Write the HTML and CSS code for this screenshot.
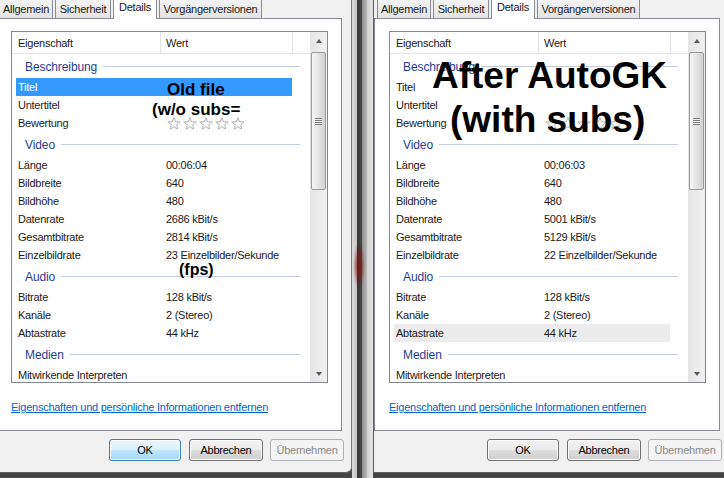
FILE: index.html
```html
<!DOCTYPE html>
<html>
<head>
<meta charset="utf-8">
<title>Eigenschaften - Details</title>
<link rel="stylesheet" href="styles.css">
</head>
<body>

<!-- old file -->
<div class="win win-left">
    <div class="tabs">
        <div class="tab t-allg">Allgemein</div>
        <div class="tab t-sich">Sicherheit</div>
        <div class="tab tab-on t-det">Details</div>
        <div class="tab t-vorg">Vorgängerversionen</div>
    </div>
    <div class="page">
        <div class="lv">
            <div class="lv-main">
                <div class="lv-head">
                    <div class="hcol hcol-1">Eigenschaft</div>
                    <div class="hcol hcol-2">Wert</div>
                    <div class="hcol hcol-3"></div>
                </div>
                <div class="grp"><span>Beschreibung</span><i></i></div>
                <div class="row row-sel"><span>Titel</span><span></span></div>
                <div class="row"><span>Untertitel</span><span></span></div>
                <div class="row"><span>Bewertung</span><span>
                    <svg class="stars" width="80" height="13" viewBox="0 0 80 13">
                        <polygon id="star" points="7,0.5 8.65,4.73 13.18,4.99 9.66,7.87 10.82,12.26 7,9.8 3.18,12.26 4.34,7.87 0.82,4.99 5.35,4.73"/>
                        <use href="#star" x="16"/>
                        <use href="#star" x="32"/>
                        <use href="#star" x="48"/>
                        <use href="#star" x="64"/>
                    </svg>
                </span></div>
                <div class="grp"><span>Video</span><i></i></div>
                <div class="row"><span>Länge</span><span>00:06:04</span></div>
                <div class="row"><span>Bildbreite</span><span>640</span></div>
                <div class="row"><span>Bildhöhe</span><span>480</span></div>
                <div class="row"><span>Datenrate</span><span>2686 kBit/s</span></div>
                <div class="row"><span>Gesamtbitrate</span><span>2814 kBit/s</span></div>
                <div class="row"><span>Einzelbildrate</span><span>23 Einzelbilder/Sekunde</span></div>
                <div class="grp"><span>Audio</span><i></i></div>
                <div class="row"><span>Bitrate</span><span>128 kBit/s</span></div>
                <div class="row"><span>Kanäle</span><span>2 (Stereo)</span></div>
                <div class="row"><span>Abtastrate</span><span>44 kHz</span></div>
                <div class="grp"><span>Medien</span><i></i></div>
                <div class="row"><span>Mitwirkende Interpreten</span><span></span></div>
            </div>
            <div class="sb">
                <div class="sb-btn"><b class="arr-up"></b></div>
                <div class="sb-track"><div class="sb-thumb"><div class="grip"></div></div></div>
                <div class="sb-btn"><b class="arr-down"></b></div>
            </div>
        </div>
        <a class="link" href="#">Eigenschaften und persönliche Informationen entfernen</a>
    </div>
    <div class="btns">
        <button class="btn btn-ok btn-focus">OK</button>
        <button class="btn btn-cancel">Abbrechen</button>
        <button class="btn btn-off">Übernehmen</button>
    </div>
    <div class="note note-old">Old file</div>
    <div class="note note-wo">(w/o subs=</div>
    <div class="note note-fps">(fps)</div>
</div>

<div class="frame"></div>

<!-- after autogk -->
<div class="win win-right">
    <div class="tabs">
        <div class="tab t-allg">Allgemein</div>
        <div class="tab t-sich">Sicherheit</div>
        <div class="tab tab-on t-det">Details</div>
        <div class="tab t-vorg">Vorgängerversionen</div>
    </div>
    <div class="page">
        <div class="lv">
            <div class="lv-main">
                <div class="lv-head">
                    <div class="hcol hcol-1">Eigenschaft</div>
                    <div class="hcol hcol-2">Wert</div>
                    <div class="hcol hcol-3"></div>
                </div>
                <div class="grp"><span>Beschreibung</span><i></i></div>
                <div class="row"><span>Titel</span><span></span></div>
                <div class="row"><span>Untertitel</span><span></span></div>
                <div class="row"><span>Bewertung</span><span>
                    <svg class="stars" width="80" height="13" viewBox="0 0 80 13">
                        <use href="#star" x="0"/>
                        <use href="#star" x="16"/>
                        <use href="#star" x="32"/>
                        <use href="#star" x="48"/>
                        <use href="#star" x="64"/>
                    </svg>
                </span></div>
                <div class="grp"><span>Video</span><i></i></div>
                <div class="row"><span>Länge</span><span>00:06:03</span></div>
                <div class="row"><span>Bildbreite</span><span>640</span></div>
                <div class="row"><span>Bildhöhe</span><span>480</span></div>
                <div class="row"><span>Datenrate</span><span>5001 kBit/s</span></div>
                <div class="row"><span>Gesamtbitrate</span><span>5129 kBit/s</span></div>
                <div class="row"><span>Einzelbildrate</span><span>22 Einzelbilder/Sekunde</span></div>
                <div class="grp"><span>Audio</span><i></i></div>
                <div class="row"><span>Bitrate</span><span>128 kBit/s</span></div>
                <div class="row"><span>Kanäle</span><span>2 (Stereo)</span></div>
                <div class="row row-hot"><span>Abtastrate</span><span>44 kHz</span></div>
                <div class="grp"><span>Medien</span><i></i></div>
                <div class="row"><span>Mitwirkende Interpreten</span><span></span></div>
            </div>
            <div class="sb">
                <div class="sb-btn"><b class="arr-up"></b></div>
                <div class="sb-track"><div class="sb-thumb"><div class="grip"></div></div></div>
                <div class="sb-btn"><b class="arr-down"></b></div>
            </div>
        </div>
        <a class="link" href="#">Eigenschaften und persönliche Informationen entfernen</a>
    </div>
    <div class="btns">
        <button class="btn btn-ok">OK</button>
        <button class="btn btn-cancel">Abbrechen</button>
        <button class="btn btn-off">Übernehmen</button>
    </div>
    <div class="note note-after">After AutoGK</div>
    <div class="note note-with">(with subs)</div>
</div>

</body>
</html>
```

FILE: styles.css
```css
html, body {
    margin: 0;
}
body {
    width: 724px;
    height: 478px;
    overflow: hidden;
    display: flex;
    background: #474747;
    font-family: "Liberation Sans", Arial, sans-serif;
    font-size: 11px;
    letter-spacing: -0.25px;
    color: #1a1a1a;
}

/* windows */
.win {
    position: relative;
    flex: none;
    width: 355px;
    height: 472px;
    background: #f0f0f0;
    border-bottom: 1px solid #5e5e5e;
}
.win-left {
    margin-left: -5px;
    border-left: 1px solid #777;
    border-right: 1px solid #7a7a7a;
    border-bottom-right-radius: 6px;
}
.win-right {
    border-left: 1px solid #5c5c5c;
}
.frame {
    flex: none;
    width: 21px;
    height: 478px;
    background:
        radial-gradient(ellipse 6px 24px at 7px 266px, rgba(125, 18, 18, 0.95), rgba(125, 18, 18, 0)),
        linear-gradient(to right, #dadada 0, #c6c6c6 5px, #333 5px, #4b4b4b 10px, #8e8e8e 10px, #b8b8b8 15px, #d4d4d4 15px, #e4e4e4 21px);
}

/* tabs */
.tabs {
    display: flex;
    align-items: flex-end;
    height: 18px;
    padding-left: 3px;
}
.tab {
    box-sizing: border-box;
    height: 20px;
    border: 1px solid #898c95;
    border-bottom: none;
    background: linear-gradient(#f4f4f4, #e3e3e3);
    padding-top: 3px;
    line-height: 14px;
    text-align: center;
    white-space: nowrap;
}
.t-allg { width: 54px; margin-right: 2px; }
.t-sich { width: 56px; margin-right: 2px; }
.t-det { width: 44px; margin-right: 2px; }
.t-vorg { width: 103px; }
.tab-on {
    position: relative;
    z-index: 1;
    height: 21px;
    margin-bottom: -1px;
    padding-top: 1px;
    background: #fff;
}

/* tab page */
.page {
    box-sizing: border-box;
    width: 346px;
    height: 413px;
    border: 1px solid #898c95;
    background: #fff;
    padding: 12px 0 0 14px;
}
.lv {
    box-sizing: border-box;
    display: flex;
    width: 317px;
    height: 352px;
    border: 1px solid #828790;
    background: #fff;
}
.lv-main {
    width: 298px;
    overflow: hidden;
}
.lv-head {
    display: flex;
    height: 22px;
    box-sizing: border-box;
    border-bottom: 1px solid #e5e5e5;
}
.hcol {
    box-sizing: border-box;
    height: 21px;
    padding-top: 2px;
    line-height: 19px;
}
.hcol-1 {
    width: 149px;
    padding-left: 6px;
    border-right: 1px solid #e1e3e7;
}
.hcol-2 {
    width: 132px;
    padding-left: 5px;
    border-right: 1px solid #e1e3e7;
}
.hcol-3 {
    flex: 1;
}

.grp {
    box-sizing: border-box;
    display: flex;
    align-items: center;
    gap: 6px;
    width: 284px;
    height: 24px;
    margin-left: 4px;
    padding: 1px 0 0 9px;
    font-size: 12px;
    letter-spacing: -0.1px;
    color: #1f3d96;
}
.grp i {
    flex: 1;
    height: 1px;
    background: #c3cce0;
}
.row {
    display: grid;
    grid-template-columns: 144px 132px;
    width: 276px;
    height: 18px;
    margin-left: 4px;
    line-height: 18px;
    white-space: nowrap;
}
.row span:first-child {
    padding-left: 2px;
}
.row span + span {
    padding-left: 6px;
}
.row-sel {
    background: #3399ff;
    color: #fff;
}
.row-hot {
    background: #ececec;
}
.stars {
    display: block;
    margin: 3px 0 0 1px;
    fill: #f8f8f8;
    stroke: #b3b3b3;
    stroke-width: 1;
}

/* scrollbar */
.sb {
    display: flex;
    flex-direction: column;
    width: 17px;
    background: linear-gradient(to right, #e4e4e4, #f1f1f1);
}
.sb-btn {
    flex: none;
    height: 17px;
    display: flex;
    align-items: center;
    justify-content: center;
}
.arr-up {
    width: 0;
    height: 0;
    border-left: 3.5px solid transparent;
    border-right: 3.5px solid transparent;
    border-bottom: 4px solid #5a5a5a;
}
.arr-down {
    width: 0;
    height: 0;
    border-left: 3.5px solid transparent;
    border-right: 3.5px solid transparent;
    border-top: 4px solid #5a5a5a;
}
.sb-track {
    flex: 1;
}
.sb-thumb {
    box-sizing: border-box;
    height: 138px;
    margin: 3px 1px 0;
    border: 1px solid #9a9a9a;
    border-radius: 2px;
    background: linear-gradient(to right, #f6f6f6, #e4e4e4 50%, #d2d2d2);
    display: flex;
    align-items: center;
    justify-content: center;
}
.grip {
    width: 7px;
    height: 7px;
    background: repeating-linear-gradient(#7d7d7d 0 1px, #eeeeee 1px 2px);
}

.link {
    display: block;
    margin-top: 17px;
    line-height: 14px;
    color: #0066cc;
    text-decoration: underline;
    white-space: nowrap;
}

/* buttons */
.btns {
    display: flex;
    padding-left: 113px;
    margin-top: 8px;
}
.btn {
    box-sizing: border-box;
    height: 22px;
    padding: 0;
    border: 1px solid #707070;
    border-radius: 3px;
    background: linear-gradient(#f2f2f2 0%, #ebebeb 50%, #dddddd 50%, #cfcfcf 100%);
    box-shadow: inset 0 0 0 1px #fbfbfb;
    font-family: "Liberation Sans", Arial, sans-serif;
    font-size: 11px;
    letter-spacing: -0.25px;
    color: #000;
}
.btn-ok { width: 72px; margin-right: 8px; }
.btn-cancel { width: 74px; margin-right: 7px; }
.btn-focus {
    border-color: #3c7fb1;
    background: linear-gradient(#eaf6fd 0%, #d9f0fc 50%, #bee6fd 50%, #a7d9f5 100%);
}
.btn-off {
    width: 74px;
    border-color: #adb2b5;
    background: #f4f4f4;
    box-shadow: none;
    color: #8a8a8a;
}

/* annotations pasted on top of the screenshot */
.note {
    position: absolute;
    z-index: 2;
    font-weight: bold;
    line-height: 1;
    letter-spacing: 0;
    color: #000;
    white-space: nowrap;
}
.note-old { left: 171px; top: 81px; font-size: 17px; }
.note-wo { left: 156px; top: 101px; font-size: 17px; }
.note-fps { left: 183px; top: 262px; font-size: 16px; }
.note-after { left: 58px; top: 57px; font-size: 37px; }
.note-with { left: 76px; top: 101px; font-size: 37px; }
```
